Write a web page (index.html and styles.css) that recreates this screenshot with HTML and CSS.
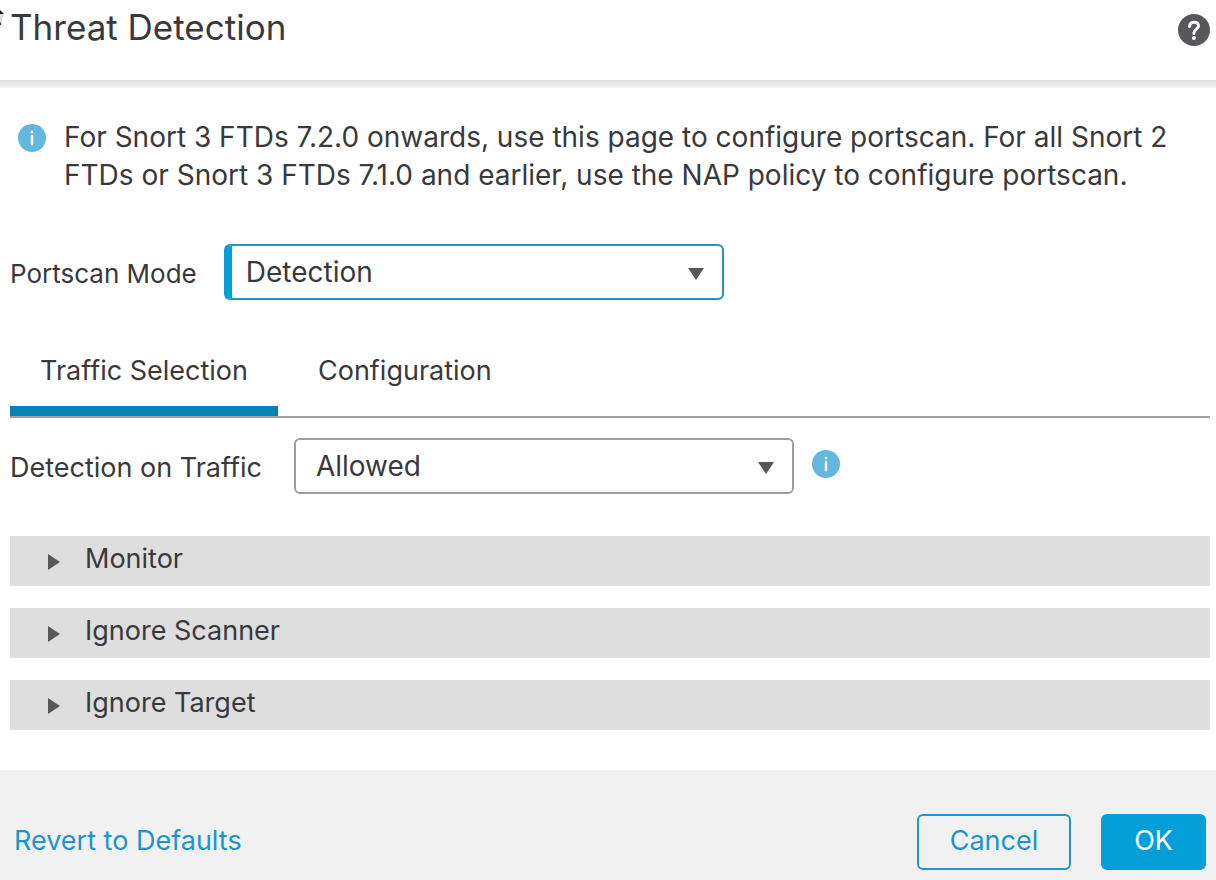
FILE: index.html
```html
<!DOCTYPE html>
<html lang="en">
<head>
  <meta charset="UTF-8">
  <meta name="viewport" content="width=device-width, initial-scale=1.0">
  <title>Threat Detection</title>
  <link rel="stylesheet" href="styles.css">
</head>
<body>

  <header class="header">
    <svg class="cursor" viewBox="0 0 6 32" aria-hidden="true">
      <path d="M0 14h4v2l-2 2v5l1 2-3 3z" fill="#ddd"/>
      <path d="M0 10l4 4H0z" fill="#111"/>
      <path d="M0 22l1 1v2H0z" fill="#444"/>
    </svg>
    <h1>Threat Detection</h1>
    <button type="button" class="help" aria-label="Help">
      <svg viewBox="0 0 32 32">
        <circle cx="16" cy="16" r="16" fill="#58585b"/>
        <path d="M11.500 12.500c.2-2.700 2-4.200 4.500-4.200 2.700 0 4.500 1.400 4.500 3.700 0 3.300-4.600 3.500-4.600 6.700v.8" fill="none" stroke="#fff" stroke-width="3" stroke-linecap="round"/>
        <circle cx="15.900" cy="24" r="2" fill="#fff"/>
      </svg>
    </button>
  </header>

  <main class="content">
    <div class="notice">
      <svg class="info" viewBox="0 0 28 28" aria-hidden="true">
        <circle cx="14" cy="14" r="14" fill="#64b8e0"/>
        <circle cx="14" cy="8" r="1.300" fill="#fff"/>
        <path d="M14 12v8" stroke="#fff" stroke-width="2.400" stroke-linecap="round"/>
      </svg>
      <p>For Snort 3 FTDs 7.2.0 onwards, use this page to configure portscan. For all Snort 2 FTDs or Snort 3 FTDs 7.1.0 and earlier, use the NAP policy to configure portscan.</p>
    </div>

    <div class="field mode">
      <label for="mode">Portscan Mode</label>
      <div class="select active">
        <select id="mode">
          <option>Detection</option>
        </select>
        <svg class="arrow" viewBox="0 0 16 12" aria-hidden="true"><path d="M0 0h16l-8 12z" fill="#58585b"/></svg>
      </div>
    </div>

    <div class="tabs" role="tablist">
      <button type="button" class="tab selected" role="tab" aria-selected="true">Traffic Selection</button>
      <button type="button" class="tab" role="tab" aria-selected="false">Configuration</button>
    </div>

    <div class="field traffic">
      <label for="traffic">Detection on Traffic</label>
      <div class="select">
        <select id="traffic">
          <option>Allowed</option>
        </select>
        <svg class="arrow" viewBox="0 0 16 12" aria-hidden="true"><path d="M0 0h16l-8 12z" fill="#58585b"/></svg>
      </div>
      <svg class="info" viewBox="0 0 28 28" aria-hidden="true">
        <circle cx="14" cy="14" r="14" fill="#64b8e0"/>
        <circle cx="14" cy="8" r="1.300" fill="#fff"/>
        <path d="M14 12v8" stroke="#fff" stroke-width="2.400" stroke-linecap="round"/>
      </svg>
    </div>

    <div class="sections">
      <button type="button" class="section" aria-expanded="false">
        <svg viewBox="0 0 12 16" aria-hidden="true"><path d="M0 0l12 8-12 8z" fill="#58585b"/></svg>
        <span>Monitor</span>
      </button>
      <button type="button" class="section" aria-expanded="false">
        <svg viewBox="0 0 12 16" aria-hidden="true"><path d="M0 0l12 8-12 8z" fill="#58585b"/></svg>
        <span>Ignore Scanner</span>
      </button>
      <button type="button" class="section" aria-expanded="false">
        <svg viewBox="0 0 12 16" aria-hidden="true"><path d="M0 0l12 8-12 8z" fill="#58585b"/></svg>
        <span>Ignore Target</span>
      </button>
    </div>
  </main>

  <footer class="footer">
    <a href="#">Revert to Defaults</a>
    <button type="button" class="btn">Cancel</button>
    <button type="button" class="btn primary">OK</button>
  </footer>

</body>
</html>
```
FILE: styles.css
```css
:root {
  --blue: #049fd9;
  --outline: #2293bd;
  --link: #1b95cb;
  --tab: #0183b7;
  --text: #39393b;
  --gray: #9e9ea2;
}

* {
  box-sizing: border-box;
}

body {
  margin: 0;
  min-height: 100vh;
  display: flex;
  flex-direction: column;
  font-family: Inter, "Liberation Sans", sans-serif;
  font-size: 27px;
  line-height: 38px;
  color: var(--text);
  background: #fff;
}

button,
select {
  font: inherit;
  color: inherit;
  border: none;
  background: none;
  padding: 0;
  margin: 0;
}

button {
  cursor: pointer;
}

.header {
  display: flex;
  justify-content: space-between;
  align-items: flex-start;
  padding: 7px 6px 41px 10px;
  background: linear-gradient(#e0e0e0, #f4f4f4) bottom / 100% 8px no-repeat;
}

/* mouse pointer at the left edge */
.cursor {
  position: absolute;
  top: 0;
  left: 0;
  width: 6px;
  height: 32px;
}

h1 {
  margin: 0;
  font-size: 35px;
  line-height: 40px;
  font-weight: 400;
}

.help {
  margin-top: 7px;
  width: 32px;
  height: 32px;
}

.help svg {
  display: block;
}

.content {
  flex: 1;
  padding: 30px 6px 40px 10px;
}

.notice {
  display: flex;
  gap: 18px;
  padding-left: 8px;
  font-size: 28px;
}

.notice p {
  margin: 0;
}

.info {
  flex: none;
  width: 28px;
  height: 28px;
}

.notice .info {
  margin-top: 6px;
}

.field {
  display: flex;
  align-items: center;
}

.field label {
  padding-top: 4px;
}

.mode {
  gap: 27px;
  margin-top: 50px;
}

.mode label {
  font-size: 26px;
}

.select {
  position: relative;
  width: 500px;
  height: 56px;
  border: 2px solid var(--gray);
  border-radius: 6px;
  font-size: 28px;
}

.select.active {
  border-color: var(--outline);
  border-left: 8px solid var(--blue);
}

.select select {
  appearance: none;
  width: 100%;
  height: 100%;
  padding: 0 20px;
  outline: none;
}

.select.active select {
  padding-left: 14px;
}

.arrow {
  position: absolute;
  top: 22px;
  right: 18px;
  width: 16px;
  height: 12px;
  pointer-events: none;
}

.tabs {
  display: flex;
  gap: 10px;
  margin-top: 40px;
  border-bottom: 2px solid var(--gray);
}

.tab {
  height: 76px;
  padding: 0 30px 4px;
  border-bottom: 10px solid transparent;
}

.tab.selected {
  border-bottom-color: var(--tab);
}

.traffic {
  gap: 32px;
  margin-top: 20px;
}

.traffic .info {
  margin: 0 0 4px -14px;
}

.sections {
  display: flex;
  flex-direction: column;
  gap: 22px;
  margin-top: 42px;
}

.section {
  display: flex;
  align-items: center;
  gap: 25px;
  height: 50px;
  padding: 0 38px;
  background: #dedede;
}

.section svg {
  width: 12px;
  height: 16px;
  margin-top: 2px;
}

.section span {
  padding-bottom: 4px;
}

.footer {
  display: flex;
  align-items: center;
  gap: 30px;
  padding: 44px 10px 10px 14px;
  background: #f1f1f1;
}

.footer a {
  margin-right: auto;
  padding-bottom: 2px;
  color: var(--link);
  text-decoration: none;
}

.btn {
  height: 56px;
  padding: 0 31px 2px;
  border: 2px solid var(--link);
  border-radius: 6px;
  color: var(--link);
}

.btn.primary {
  border-color: var(--blue);
  background: var(--blue);
  color: #fff;
}
```
